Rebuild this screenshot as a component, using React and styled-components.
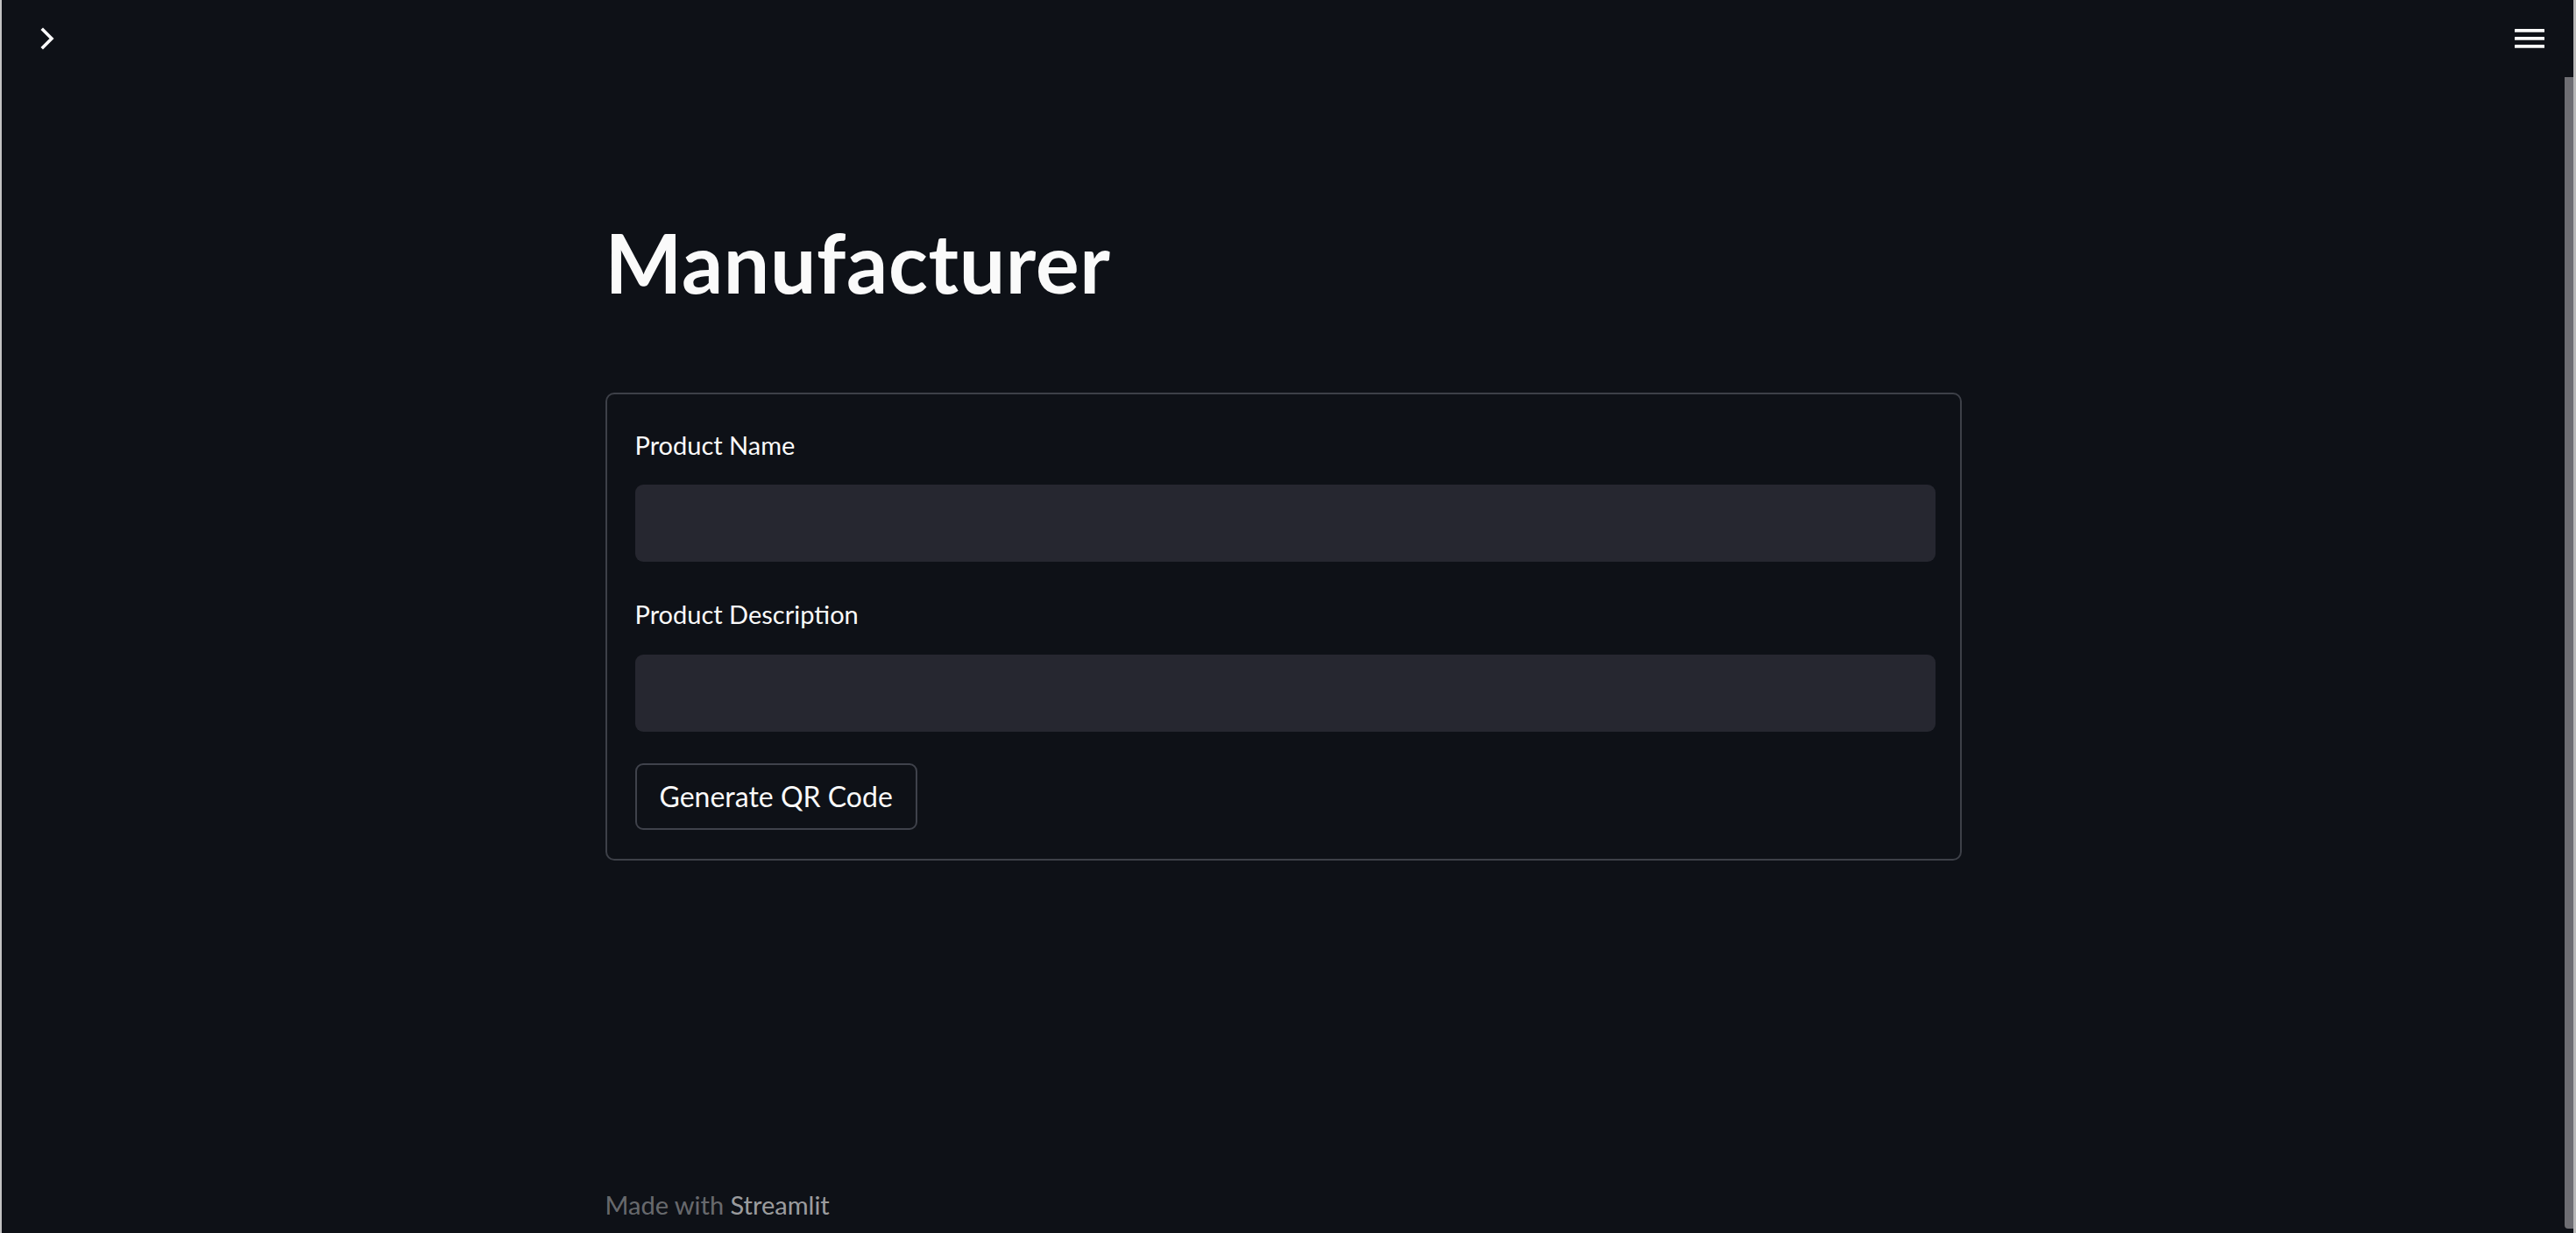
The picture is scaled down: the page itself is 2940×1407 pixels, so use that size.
import React from "react";
import styled, { createGlobalStyle } from "styled-components";

const GlobalStyle = createGlobalStyle`
  html, body {
    margin: 0;
    padding: 0;
    background: #0e1117;
    overflow: hidden;
  }
  * { box-sizing: border-box; }
`;

const FONT = `Lato, "Open Sans", "Liberation Sans", sans-serif`;

const Frame = styled.div`
  display: flex;
  height: 1407px;
  width: 2940px;
  background: #0e1117;
  font-family: ${FONT};
  color: #fafafa;
`;

const LeftEdge = styled.div`
  width: 2px;
  flex: none;
  background: #c3c3c3;
`;

const Main = styled.div`
  flex: 1;
  display: flex;
  flex-direction: column;
  min-width: 0;
`;

const Toolbar = styled.header`
  height: 88px;
  flex: none;
  display: flex;
  align-items: center;
  justify-content: space-between;
  padding: 0 23px 0 44px;
`;

const IconButton = styled.button`
  background: none;
  border: none;
  padding: 0;
  margin: 0;
  display: flex;
  align-items: center;
  justify-content: center;
  color: #fafafa;
  cursor: pointer;
`;

const Content = styled.main`
  flex: 1;
  width: 1548px;
  margin: 0 auto;
  display: flex;
  flex-direction: column;
`;

const Title = styled.h1`
  margin: 156px 0 0 0;
  font-family: ${FONT};
  font-size: 93px;
  font-weight: 700;
  line-height: 1.2;
  letter-spacing: 0.7px;
  color: #fafafa;
`;

const Form = styled.form`
  margin-top: 92px;
  border: 2px solid #3d4048;
  border-radius: 10px;
  padding: 41px 28px 33px 32px;
  display: flex;
  flex-direction: column;
  align-items: flex-start;
`;

const Label = styled.label`
  display: block;
  font-size: 29px;
  line-height: 1.2;
  color: #fafafa;
  margin-top: ${(p) => p.$top || 0}px;
`;

const Input = styled.input`
  display: block;
  width: 100%;
  height: 88px;
  margin-top: 28px;
  border: none;
  outline: none;
  border-radius: 9px;
  background: #262730;
  color: #fafafa;
  font-family: ${FONT};
  font-size: 32px;
  padding: 0 24px;
`;

const Button = styled.button`
  margin-top: 36px;
  height: 76px;
  padding: 0 26px;
  border: 2px solid #3f424b;
  border-radius: 9px;
  background: #0e1117;
  color: #fafafa;
  font-family: ${FONT};
  font-size: 32px;
  line-height: 1.2;
  cursor: pointer;
`;

const Footer = styled.footer`
  margin-top: auto;
  padding-bottom: 14px;
  font-size: 29px;
  line-height: 1.2;
  color: rgba(250, 250, 250, 0.4);
`;

const FooterLink = styled.a`
  color: rgba(250, 250, 250, 0.62);
  text-decoration: none;
`;

const ScrollTrack = styled.div`
  width: 13px;
  flex: none;
  display: flex;
  flex-direction: row;
`;

const ScrollLane = styled.div`
  flex: 1;
  display: flex;
  flex-direction: column;
  padding: 88px 0 5px 0;
`;

const ScrollThumb = styled.div`
  flex: 1;
  background: #6e6e73;
  border-radius: 0 0 0 4px;
`;

const ScrollEdge = styled.div`
  width: 3px;
  background: #b8b8b8;
`;

const Chevron = () => (
  <svg width="16" height="26" viewBox="0 0 16 26" fill="none">
    <polyline
      points="3,3 13,13 3,23"
      stroke="#fafafa"
      strokeWidth="3.6"
      strokeLinecap="square"
      strokeLinejoin="miter"
    />
  </svg>
);

const Hamburger = () => (
  <svg width="34" height="24" viewBox="0 0 34 24" fill="#fafafa">
    <rect x="0" y="1" width="34" height="3.8" rx="0.5" />
    <rect x="0" y="10" width="34" height="3.8" rx="0.5" />
    <rect x="0" y="19" width="34" height="3.8" rx="0.5" />
  </svg>
);

export default function App() {
  return (
    <>
      <GlobalStyle />
      <Frame>
        <LeftEdge />
        <Main>
          <Toolbar>
            <IconButton aria-label="Open sidebar">
              <Chevron />
            </IconButton>
            <IconButton aria-label="Menu">
              <Hamburger />
            </IconButton>
          </Toolbar>
          <Content>
            <Title>Manufacturer</Title>
            <Form onSubmit={(e) => e.preventDefault()}>
              <Label htmlFor="pname">Product Name</Label>
              <Input id="pname" type="text" />
              <Label htmlFor="pdesc" $top={43}>
                Product Description
              </Label>
              <Input id="pdesc" type="text" />
              <Button type="submit">Generate QR Code</Button>
            </Form>
            <Footer>
              Made with <FooterLink href="#">Streamlit</FooterLink>
            </Footer>
          </Content>
        </Main>
        <ScrollTrack>
          <ScrollLane>
            <ScrollThumb />
          </ScrollLane>
          <ScrollEdge />
        </ScrollTrack>
      </Frame>
    </>
  );
}
